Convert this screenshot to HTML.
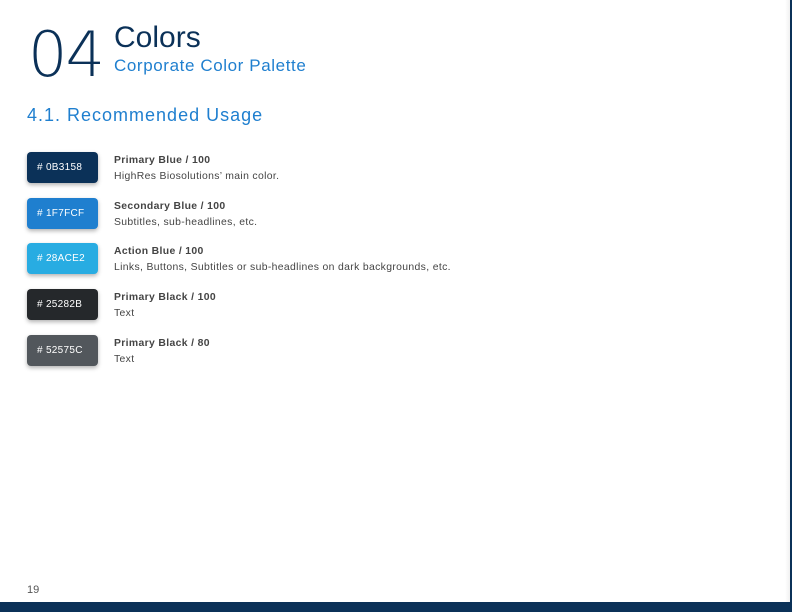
<!DOCTYPE html>
<html><head><meta charset="utf-8"><style>
*{margin:0;padding:0;box-sizing:border-box}
body{width:792px;height:612px;position:relative;background:#fff;font-family:"Liberation Sans",sans-serif;overflow:hidden}
.a{position:absolute}
.num{left:28px;top:24px;font-family:"DejaVu Sans ExtraLight","DejaVu Sans",sans-serif;font-weight:200;font-size:62px;color:#0B3158;line-height:1;letter-spacing:-2px}
.t1{left:114px;top:23px;font-size:30px;color:#0B3158;line-height:1}
.t2{left:114px;top:57px;font-size:17px;color:#1F7FCF;line-height:1;letter-spacing:0.6px}
.h{left:27px;top:106px;font-size:18px;color:#1F7FCF;letter-spacing:1px;line-height:1}
.sw{left:27px;width:71px;height:31px;border-radius:4px;color:#fff;font-size:10px;line-height:31px;padding-left:10px;box-shadow:0 2px 4px rgba(0,0,0,0.3);letter-spacing:0.3px}
.lb{left:114px;font-size:10.4px;color:#444;line-height:16px;letter-spacing:0.35px}
.lb b{color:#444}
</style></head><body>
<div class="a num">04</div>
<div class="a t1">Colors</div>
<div class="a t2">Corporate Color Palette</div>
<div class="a h">4.1. Recommended Usage</div>

<div class="a sw" style="top:152px;background:#0B3158"># 0B3158</div>
<div class="a lb" style="top:153px"><b>Primary Blue / 100</b><br>HighRes Biosolutions’ main color.</div>
<div class="a sw" style="top:198px;background:#1F7FCF"># 1F7FCF</div>
<div class="a lb" style="top:199px"><b>Secondary Blue / 100</b><br>Subtitles, sub-headlines, etc.</div>
<div class="a sw" style="top:243px;background:#28ACE2"># 28ACE2</div>
<div class="a lb" style="top:244px"><b>Action Blue / 100</b><br>Links, Buttons, Subtitles or sub-headlines on dark backgrounds, etc.</div>
<div class="a sw" style="top:289px;background:#25282B"># 25282B</div>
<div class="a lb" style="top:290px"><b>Primary Black / 100</b><br>Text</div>
<div class="a sw" style="top:335px;background:#52575C"># 52575C</div>
<div class="a lb" style="top:336px"><b>Primary Black / 80</b><br>Text</div>

<div class="a" style="left:27px;top:584px;font-size:11px;color:#555">19</div>
<div class="a" style="left:785px;top:0;width:6px;height:612px;background:linear-gradient(90deg,#fff,#eee)"></div>
<div class="a" style="left:790px;top:0;width:2px;height:612px;background:#0B3158"></div>
<div class="a" style="left:0;top:602px;width:792px;height:10px;background:#0B3158"></div>
</body></html>
